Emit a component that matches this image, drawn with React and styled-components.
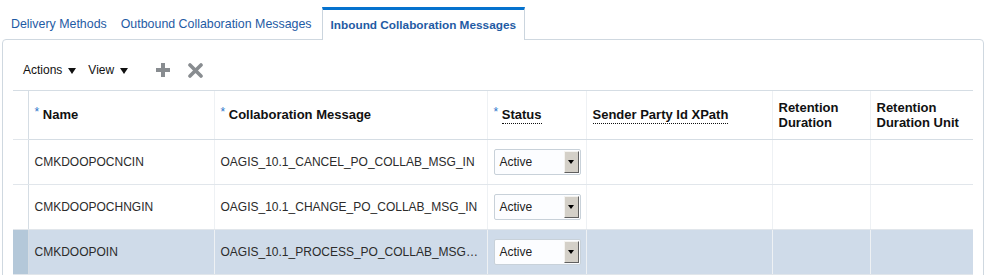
import React from 'react';
import styled, { createGlobalStyle } from 'styled-components';

const GlobalStyle = createGlobalStyle`
  body {
    margin: 0;
    background: #fff;
    font-family: "Liberation Sans", Arial, sans-serif;
  }
`;

const rows = [
  { name: 'CMKDOOPOCNCIN', message: 'OAGIS_10.1_CANCEL_PO_COLLAB_MSG_IN', status: 'Active' },
  { name: 'CMKDOOPOCHNGIN', message: 'OAGIS_10.1_CHANGE_PO_COLLAB_MSG_IN', status: 'Active' },
  { name: 'CMKDOOPOIN', message: 'OAGIS_10.1_PROCESS_PO_COLLAB_MSG_IN', status: 'Active', selected: true },
];

const App = () => {
  return (
    <>
      <GlobalStyle />
      <Page>
        <TabBar>
          <Tab>Delivery Methods</Tab>
          <Tab>Outbound Collaboration Messages</Tab>
          <Tab $active>Inbound Collaboration Messages</Tab>
        </TabBar>

        <Panel>
          <Toolbar>
            <MenuButton>Actions <Caret /></MenuButton>
            <MenuButton>View <Caret /></MenuButton>
            <IconButton $first title="Add">
              <svg width="14" height="14" viewBox="0 0 14 14">
                <path d="M5 0h4v5h5v4H9v5H5V9H0V5h5z" fill="#888c90" />
              </svg>
            </IconButton>
            <IconButton title="Delete">
              <svg width="15" height="15" viewBox="0 0 15 15">
                <path d="M2 2L13 13M13 2L2 13" stroke="#888c90" strokeWidth="3.6" strokeLinecap="round" />
              </svg>
            </IconButton>
          </Toolbar>

          <Grid>
            <colgroup>
              <col style={{ width: 15 }} />
              <col style={{ width: 186 }} />
              <col style={{ width: 273 }} />
              <col style={{ width: 99 }} />
              <col style={{ width: 186 }} />
              <col style={{ width: 98 }} />
              <col style={{ width: 103 }} />
            </colgroup>
            <thead>
              <tr>
                <RowHead as="th" />
                <HeadCell><Req>*</Req> Name</HeadCell>
                <HeadCell><Req>*</Req> Collaboration Message</HeadCell>
                <HeadCell><Req>*</Req> <Dotted>Status</Dotted></HeadCell>
                <HeadCell><Dotted>Sender Party Id XPath</Dotted></HeadCell>
                <HeadCell>Retention Duration</HeadCell>
                <HeadCell>Retention Duration Unit</HeadCell>
              </tr>
            </thead>
            <tbody>
              {rows.map((r) => (
                <Row key={r.name} $selected={r.selected}>
                  <RowHead $selected={r.selected} />
                  <Cell>{r.name}</Cell>
                  <Cell>{r.message}</Cell>
                  <Cell>
                    <SelectBox>
                      <span>{r.status}</span>
                      <SelectButton><i /></SelectButton>
                    </SelectBox>
                  </Cell>
                  <Cell />
                  <Cell />
                  <Cell />
                </Row>
              ))}
            </tbody>
          </Grid>
        </Panel>
      </Page>
    </>
  );
};

const Page = styled.div`
  width: 988px;
  height: 275px;
  overflow: hidden;
`;

const TabBar = styled.div`
  display: flex;
  align-items: flex-end;
  height: 39px;
  padding-left: 4px;
  position: relative;
  z-index: 1;
`;

const Tab = styled.div`
  height: ${(p) => (p.$active ? '30px' : '29px')};
  line-height: ${(p) => (p.$active ? '30px' : '29px')};
  padding: ${(p) => (p.$active ? '0 8px' : '0 7px')};
  margin-left: ${(p) => (p.$active ? '3px' : '0')};
  margin-bottom: ${(p) => (p.$active ? '-1px' : '0')};
  font-size: ${(p) => (p.$active ? '11.8px' : '12.4px')};
  font-weight: ${(p) => (p.$active ? 'bold' : 'normal')};
  color: #1f5ba4;
  white-space: nowrap;
  background: ${(p) => (p.$active ? '#fff' : 'transparent')};
  border: ${(p) => (p.$active ? '1px solid #cbd5de' : 'none')};
  border-top: ${(p) => (p.$active ? '3px solid #0572ce' : 'none')};
  border-bottom: none;
`;

const Panel = styled.div`
  margin: 0 4px 0 2px;
  border: 1px solid #cfd8e0;
  border-radius: 4px 4px 0 0;
  padding-bottom: 20px;
`;

const Toolbar = styled.div`
  display: flex;
  align-items: center;
  height: 40px;
  padding: 10px 0 0 20px;
`;

const MenuButton = styled.div`
  display: flex;
  align-items: center;
  gap: 6px;
  margin-right: 12px;
  font-size: 12px;
  color: #111;
`;

const Caret = styled.span`
  width: 0;
  height: 0;
  border-left: 4.5px solid transparent;
  border-right: 4.5px solid transparent;
  border-top: 6px solid #111;
  margin-top: 1px;
`;

const IconButton = styled.div`
  display: flex;
  align-items: center;
  justify-content: center;
  width: 16px;
  height: 16px;
  margin-left: ${(p) => (p.$first ? '15px' : '16px')};
`;

const Grid = styled.table`
  margin-left: 10px;
  width: 960px;
  border-collapse: collapse;
  table-layout: fixed;
  font-size: 12px;
`;

const HeadCell = styled.th`
  height: 48px;
  padding: 0 6px;
  border-top: 1px solid #d5dde4;
  border-bottom: 1px solid #d5dde4;
  border-left: 1px solid #eef1f4;
  text-align: left;
  vertical-align: middle;
  font-size: 13px;
  line-height: 15px;
  font-weight: bold;
  color: #111;
  white-space: normal;
`;

const Req = styled.span`
  color: #2f78cc;
  font-weight: normal;
  font-size: 12px;
  position: relative;
  top: -3px;
`;

const Dotted = styled.span`
  display: inline-block;
  line-height: 14px;
  border-bottom: 1px dotted #111;
  padding-bottom: 1px;
`;

const Row = styled.tr`
  background: ${(p) => (p.$selected ? '#cfdbe9' : '#fff')};
`;

const RowHead = styled.td`
  padding: 0;
  border-top: 1px solid #d5dde4;
  border-bottom: 1px solid #e1e6eb;
  border-right: 1px solid #d5dde4;
  background: ${(p) => (p.$selected ? '#b4c8d9' : 'transparent')};
`;

const Cell = styled.td`
  height: 44px;
  padding: 0 8px 0 6px;
  border-bottom: 1px solid #e1e6eb;
  border-left: 1px solid #eef1f4;
  color: #2b2b2b;
  white-space: nowrap;
  overflow: hidden;
  text-overflow: ellipsis;
  vertical-align: middle;
`;

const SelectBox = styled.div`
  display: flex;
  align-items: center;
  justify-content: space-between;
  box-sizing: border-box;
  width: 87px;
  height: 26px;
  padding: 0 1px 0 5px;
  border: 1px solid #c8d1d9;
  border-radius: 2px;
  background: #fcfdff;
  color: #222;
  font-size: 12px;
`;

const SelectButton = styled.div`
  display: flex;
  align-items: center;
  justify-content: center;
  box-sizing: border-box;
  width: 15px;
  height: 22px;
  background: #d4d0c8;
  border: 1px solid;
  border-color: #f4f3f0 #5f5f5f #5f5f5f #f4f3f0;

  i {
    width: 0;
    height: 0;
    border-left: 3.5px solid transparent;
    border-right: 3.5px solid transparent;
    border-top: 4px solid #000;
  }
`;

export default App;
